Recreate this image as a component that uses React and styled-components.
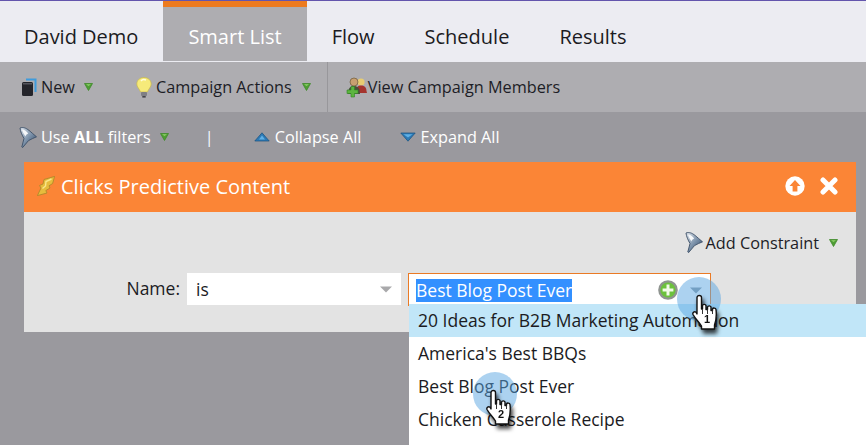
import React from "react";
import styled, { createGlobalStyle } from "styled-components";

const Global = createGlobalStyle`
  html, body { margin: 0; padding: 0; height: 100%; }
  body { background: #9a999e; font-family: "Open Sans", "Liberation Sans", sans-serif; overflow: hidden; }
`;
const Page = styled.div`
  position: relative;
  width: 866px;
  height: 445px;
  overflow: hidden;
  background: #9a999e;
  border-top: 1px solid #6355ad;
  box-sizing: border-box;
`;
const Tabs = styled.div`
  display: flex;
  height: 61px;
  background: #ececf2;
  padding-left: 0;
`;
const Tab = styled.div`
  box-sizing: border-box;
  height: 60px;
  padding: 11px 25px 0 ${p => (p.$first ? 24 : 25)}px;
  display: flex;
  align-items: center;
  font-size: 20px;
  color: ${p => (p.$active ? "#fff" : "#1b1b22")};
  background: ${p => (p.$active ? "#aeadb1" : "transparent")};
  border-top: ${p => (p.$active ? "6px solid #ec7a1f" : "0")};
  ${p => p.$active && "padding-top: 5px;"}
`;
const Toolbar = styled.div`
  display: flex;
  align-items: center;
  height: 50px;
  background: #aeadb1;
  font-size: 16.25px;
  color: #1d1d26;
`;
const ToolItem = styled.div`
  display: flex;
  align-items: center;
  margin-left: ${p => p.$ml || 0}px;
`;
const Divider = styled.div`
  width: 1px;
  height: 50px;
  background: #98979b;
  margin-left: 16px;
`;
const Caret = styled.svg`
  width: 9px;
  height: 8px;
  margin-left: ${p => p.$ml || 9}px;
  flex: none;
`;
const FilterBar = styled.div`
  display: flex;
  align-items: center;
  height: 50px;
  font-size: 16.25px;
  color: #fff;
`;
const Pipe = styled.span`
  margin-left: 36px;
  color: #f4fbff;
`;
const Card = styled.section`
  margin-left: 24px;
  width: 832px;
  background: #e3e3e3;
`;
const CardHeader = styled.header`
  display: flex;
  align-items: center;
  height: 50px;
  box-sizing: border-box;
  padding: 0 0 2px 13px;
  background: #fb8536;
  color: #fff;
  font-size: 20px;
`;
const HeaderActions = styled.div`
  display: flex;
  align-items: center;
  margin-left: auto;
  margin-right: 18px;
  gap: 15px;
`;
const CardBody = styled.div`
  height: 120px;
  display: flex;
  flex-direction: column;
`;
const ConstraintRow = styled.div`
  height: 61px;
  display: flex;
  align-items: center;
  justify-content: flex-end;
  padding-right: 18px;
  box-sizing: border-box;
  font-size: 16.25px;
  color: #1d1d26;
`;
const FieldRow = styled.div`
  display: flex;
  align-items: flex-start;
  font-size: 17.5px;
  color: #1b1b1f;
`;
const Label = styled.label`
  width: 156px;
  text-align: right;
  line-height: 30px;
`;
const SelectBox = styled.div`
  box-sizing: border-box;
  width: 214px;
  height: 32px;
  margin-left: 7px;
  background: #fff;
  display: flex;
  align-items: center;
  padding: 0 9px;
  justify-content: space-between;
`;
const Combo = styled.div`
  box-sizing: border-box;
  width: 303px;
  height: 33px;
  margin-left: 7px;
  background: #fff;
  border: 1px solid #ea7a25;
  border-bottom: 0;
  display: flex;
  align-items: center;
  padding: 0 0 0 7px;
`;
const Selected = styled.span`
  background: #3390ff;
  color: #fff;
  line-height: 23px;
`;
const ComboIcons = styled.div`
  margin-left: auto;
  display: flex;
  align-items: center;
  margin-right: 8px;
  gap: 12px;
`;
const Dropdown = styled.ul`
  position: absolute;
  left: 409px;
  top: 303px;
  width: 457px;
  height: 141px;
  margin: 0;
  padding: 0;
  list-style: none;
  background: #fff;
  font-size: 17.5px;
  color: #1b1b22;
`;
const Option = styled.li`
  height: 33px;
  line-height: 32px;
  padding-left: 9px;
  background: ${p => (p.$hover ? "#c1e6f8" : "transparent")};
`;
const Callout = styled.div`
  position: absolute;
  left: ${p => p.$x}px;
  top: ${p => p.$y}px;
  width: 44px;
  height: 44px;
  border-radius: 50%;
  background: rgba(90, 165, 225, 0.5);
`;
const HandWrap = styled.div`
  position: absolute;
  left: ${p => p.$x}px;
  top: ${p => p.$y}px;
  width: 30px;
  height: 38px;
  filter: drop-shadow(2px 4px 2px rgba(0,0,0,0.75));
`;
const HandNum = styled.span`
  position: absolute;
  left: 0;
  right: 0;
  top: 19px;
  text-align: center;
  font: 700 11px "Liberation Sans", sans-serif;
  color: #111;
`;

const GreenCaret = ({ ml }) => (
  <Caret $ml={ml} viewBox="0 0 9 8">
    <path d="M0.5 0.5H8.5L4.5 7.5Z" fill="#4f9e35" stroke="#3f8a2a" strokeWidth="0.8" strokeLinejoin="round" />
    <path d="M2 1.2H7L4.5 3Z" fill="#8fd06a" />
  </Caret>
);
const BookIcon = () => (
  <svg width="16" height="19" viewBox="0 0 16 19" style={{ marginLeft: 21, flex: "none" }}>
    <path d="M5 1.5H14.5V14" fill="none" stroke="#3f9bdc" strokeWidth="2" />
    <rect x="1" y="4" width="11" height="14" rx="1.5" fill="#24242a" />
    <rect x="2" y="5" width="9" height="1.5" fill="#55555c" />
  </svg>
);
const BulbIcon = () => (
  <svg width="16" height="21" viewBox="0 0 16 21" style={{ flex: "none" }}>
    <path d="M8 0.5C3.8 0.5 0.8 3.4 0.8 7C0.8 10 3.2 11.5 4.6 15H11.4C12.8 11.5 15.2 10 15.2 7C15.2 3.4 12.2 0.5 8 0.5Z" fill="#f6ea7a" stroke="#c9b94a" strokeWidth="0.7" />
    <path d="M5 4C6 2.6 8 2.2 10 3" stroke="#fffde0" strokeWidth="1.5" fill="none" />
    <rect x="5" y="15" width="6" height="4" rx="1" fill="#7f7f84" />
    <rect x="6.3" y="19" width="3.4" height="1.6" fill="#44444a" />
  </svg>
);
const UsersIcon = () => (
  <svg width="22" height="21" viewBox="0 0 22 21" style={{ marginLeft: 18, flex: "none" }}>
    <circle cx="15" cy="5" r="3.6" fill="#e8cd72" />
    <path d="M10 16C10 10 12 8.5 15 8.5C18 8.5 20.5 10 20.5 14L21 16Z" fill="#a5342e" />
    <circle cx="8" cy="5" r="4" fill="#c89f70" stroke="#6d5a3a" strokeWidth="0.7" />
    <path d="M2 17C2 11 4.5 9 8 9C11.5 9 14 11 14 17Z" fill="#4a4f3c" />
    <path d="M5 9.5H8.5V13H12V16.5H8.5V20H5V16.5H1V13H5Z" fill="#5cb53f" stroke="#2f8524" strokeWidth="0.6" />
  </svg>
);
const Funnel = ({ ml = 0, id }) => (
  <svg width="18" height="21" viewBox="0 0 18 21" style={{ marginLeft: ml, flex: "none" }}>
    <defs>
      <linearGradient id={id} x1="0" y1="0" x2="1" y2="1">
        <stop offset="0" stopColor="#dfe5ec" />
        <stop offset="0.5" stopColor="#7d93ab" />
        <stop offset="1" stopColor="#28405f" />
      </linearGradient>
    </defs>
    <path d="M1 1C4 -0.2 7 1 10 3.4C12.5 5.4 15 7.8 17.5 9.8C15 11 12 12 9.5 13.6L3.6 20.6L2.8 20L5 11.5C3 8 1.4 4.5 1 1Z" fill={`url(#${id})`} stroke="#3c4f66" strokeWidth="0.9" strokeLinejoin="round" />
    <path d="M3 2.6C5.5 2.6 7.6 4.6 9.2 6.6C8 7.2 7 8 6.4 9.4C4.8 7 3.6 5 3 2.6Z" fill="#f6f8fa" />
  </svg>
);
const BlueTri = ({ down, ml, mr = 5 }) => (
  <svg width="16" height="10" viewBox="0 0 16 10" style={{ marginLeft: ml, marginRight: mr, flex: "none" }}>
    <path d={down ? "M0.8 1H15.2L8 9.2Z" : "M0.8 9H15.2L8 0.8Z"} fill="#2e7ab5" stroke="#15507f" strokeWidth="0.7" />
    <path d={down ? "M3.5 2.2H12.5L8 5.5Z" : "M5 7.4L8 3.5L11 7.4Z"} fill="#5fb0e6" />
  </svg>
);
const Bolt = () => (
  <svg width="18" height="20" viewBox="0 0 18 20" style={{ marginRight: 6, flex: "none" }}>
    <path d="M17.6 0.4L7 3.5L6 8L2.5 9.5L4 12L0.4 19.6L10 17L8.8 14.6L13 12L12 9.8L15.6 7.5Z" fill="#e6bc3d" stroke="#a9862a" strokeWidth="0.8" strokeLinejoin="round" />
    <path d="M14.5 3L9 5.5L8.5 10L5.5 12.5" fill="none" stroke="#f9e88a" strokeWidth="1.4" />
  </svg>
);
const UpCircle = () => (
  <svg width="20" height="20" viewBox="0 0 20 20">
    <circle cx="10" cy="10" r="9.7" fill="#fff" />
    <path d="M10 4L15.5 10H12.4V15.6H7.6V10H4.5Z" fill="#fb8536" />
  </svg>
);
const CloseX = () => (
  <svg width="18" height="18" viewBox="0 0 18 18">
    <path d="M3 3L15 15M15 3L3 15" stroke="#fff" strokeWidth="5" strokeLinecap="round" />
  </svg>
);
const PlusCircle = () => (
  <svg width="20" height="20" viewBox="0 0 20 20" style={{ flex: "none" }}>
    <circle cx="10" cy="10" r="9.8" fill="#8f9490" />
    <circle cx="10" cy="10" r="7.6" fill="#6cc13d" />
    <path d="M10 4.6V15.4M4.6 10H15.4" stroke="#f2fbe9" strokeWidth="3" />
  </svg>
);
const GrayCaret = ({ color = "#a9a9ab" }) => (
  <svg width="12" height="7" viewBox="0 0 12 7" style={{ flex: "none" }}>
    <path d="M0 0.5H12L6 6.5Z" fill={color} />
  </svg>
);
const Hand = ({ x, y, n }) => (
  <HandWrap $x={x} $y={y}>
    <svg width="30" height="38" viewBox="0 0 30 38">
      <path d="M5 3.5C5 0.8 9.5 0.8 9.5 3.5V15L10.5 15V11.5C11 10 13.5 10 14 11.5V15.5L15.5 15.5V13C16 11.5 18.5 11.5 19 13V16.5L20.5 16.5V15C21 13.6 23.7 13.8 24 15.5C24.6 21 24.4 26 22.5 31V35H9.5V32C7 28 3.5 25 1 20.5C0.2 18.5 2.5 17 4 18.2L5 20Z" fill="#fff" stroke="#111" strokeWidth="1.4" strokeLinejoin="round" />
      <path d="M10.5 15V20M15.5 15.5V20M20.5 16.5V20" stroke="#333" strokeWidth="1" />
    </svg>
    <HandNum>{n}</HandNum>
  </HandWrap>
);

export default function App() {
  return (
    <Page>
      <Global />
      <Tabs>
        <Tab $first>David Demo</Tab>
        <Tab $active>Smart List</Tab>
        <Tab>Flow</Tab>
        <Tab>Schedule</Tab>
        <Tab>Results</Tab>
      </Tabs>
      <Toolbar>
        <ToolItem>
          <BookIcon />
          <span style={{ marginLeft: 4 }}>New</span>
          <GreenCaret />
        </ToolItem>
        <ToolItem $ml={43}>
          <BulbIcon />
          <span style={{ marginLeft: 4 }}>Campaign Actions</span>
          <GreenCaret ml={10} />
        </ToolItem>
        <Divider />
        <ToolItem>
          <UsersIcon />
          <span>View Campaign Members</span>
        </ToolItem>
      </Toolbar>
      <FilterBar>
        <ToolItem>
          <Funnel ml={19} id="funnelA" />
          <span style={{ marginLeft: 4 }}>Use <b>ALL</b> filters</span>
          <GreenCaret />
        </ToolItem>
        <Pipe>|</Pipe>
        <ToolItem $ml={40}>
          <BlueTri />
          <span>Collapse All</span>
        </ToolItem>
        <ToolItem>
          <BlueTri ml={39} mr={4} down />
          <span>Expand All</span>
        </ToolItem>
      </FilterBar>
      <Card>
        <CardHeader>
          <Bolt />
          Clicks Predictive Content
          <HeaderActions>
            <UpCircle />
            <CloseX />
          </HeaderActions>
        </CardHeader>
        <CardBody>
          <ConstraintRow>
            <Funnel id="funnelB" />
            <span style={{ marginLeft: 3 }}>Add Constraint</span>
            <GreenCaret ml={10} />
          </ConstraintRow>
          <FieldRow>
            <Label>Name:</Label>
            <SelectBox>
              is
              <GrayCaret />
            </SelectBox>
            <Combo>
              <Selected>Best Blog Post Ever</Selected>
              <ComboIcons>
                <PlusCircle />
                <GrayCaret color="#8d9aa5" />
              </ComboIcons>
            </Combo>
          </FieldRow>
        </CardBody>
      </Card>
      <Dropdown>
        <Option $hover>20 Ideas for B2B Marketing Automation</Option>
        <Option>America's Best BBQs</Option>
        <Option>Best Blog Post Ever</Option>
        <Option>Chicken Casserole Recipe</Option>
      </Dropdown>
      <Callout $x={677} $y={276} />
      <Callout $x={473} $y={371} />
      <Hand x={692} y={293} n="1" />
      <Hand x={486} y={388} n="2" />
    </Page>
  );
}
